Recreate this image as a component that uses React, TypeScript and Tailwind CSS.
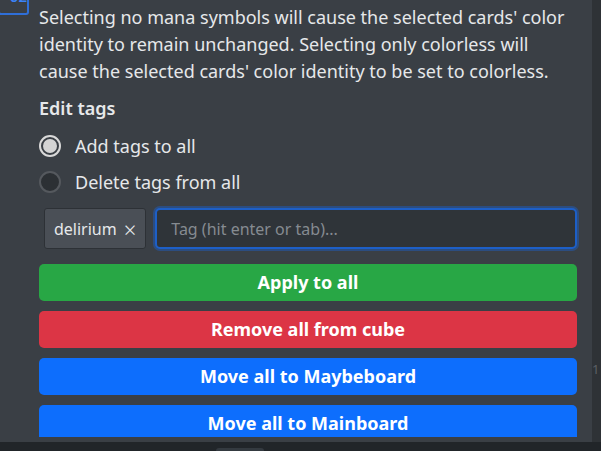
import { useState } from "react";

const font = { fontFamily: "'Segoe UI', 'Noto Sans', 'Open Sans', sans-serif" };

function Radio({ checked, label }: { checked: boolean; label: string }) {
  return (
    <label className="flex h-[36px] items-center gap-[14px]">
      {checked ? (
        <span className="flex h-[22px] w-[22px] items-center justify-center rounded-full border-2 border-[#d9d9d9] bg-[#3a3f45]">
          <span className="h-[14px] w-[14px] rounded-full bg-[#d4d4d4]" />
        </span>
      ) : (
        <span className="h-[22px] w-[22px] rounded-full border-2 border-[#55595e] bg-[#2c3034]" />
      )}
      <span className="text-[18px] text-[#e6e8ea]">{label}</span>
    </label>
  );
}

export default function App() {
  const [tag, setTag] = useState("");
  const buttons = [
    { label: "Apply to all", cls: "bg-[#28a745]" },
    { label: "Remove all from cube", cls: "bg-[#dc3545]" },
    { label: "Move all to Maybeboard", cls: "bg-[#0d6efd]" },
    { label: "Move all to Mainboard", cls: "bg-[#0d6efd]" },
  ];

  return (
    <div className="flex h-[451px] w-[601px] flex-col overflow-hidden bg-[#212529]" style={font}>
      <div className="flex h-[442px] shrink-0">
        <div className="w-[592px] shrink-0 bg-[#3a3f45]">
          <div className="h-[437px] overflow-hidden">
            <div className="-ml-[2px] -mt-[16px] h-[31px] w-[31px] overflow-hidden rounded-[3px] border-2 border-[#2f6fd8] text-right text-[15px] font-semibold leading-[20px] text-[#3b82f6]">
              02
            </div>
            <div className="pl-[39px] pr-[15px]">
              <p className="-mt-[11px] text-[18px] leading-[27px] text-[#e6e8ea]">
                Selecting no mana symbols will cause the selected cards' color identity to remain unchanged. Selecting only colorless will cause the selected cards' color identity to be set to colorless.
              </p>
              <h5 className="mt-[11px] text-[18px] font-semibold leading-[24px] text-[#e6e8ea]">Edit tags</h5>
              <div className="mt-[8px]">
                <Radio checked label="Add tags to all" />
                <Radio checked={false} label="Delete tags from all" />
              </div>
              <div className="mt-[8px] flex gap-[9px] pl-[5px]">
                <span className="flex h-[41px] items-center gap-[7px] rounded-[3px] border border-[#2d3136] bg-[#4a4f56] pl-[9px] pr-[9px] text-[16px] text-[#e6e8ea]">
                  delirium <span className="text-[22px] font-light leading-none">×</span>
                </span>
                <input
                  autoFocus
                  value={tag}
                  onChange={(e) => setTag(e.target.value)}
                  placeholder="Tag (hit enter or tab)..."
                  className="h-[41px] flex-1 rounded-[5px] border-2 border-[#1d5fc7] bg-[#2f3439] px-[14px] text-[16px] text-[#e6e8ea] caret-white shadow-[0_0_0_2px_rgba(29,95,199,0.45)] outline-none placeholder:text-[#868b91]"
                />
              </div>
              <div className="mt-[15px] flex flex-col gap-[10px]">
                {buttons.map((b) => (
                  <button
                    key={b.label}
                    className={`h-[37px] w-full rounded-[5px] text-[18px] font-bold text-white ${b.cls}`}
                  >
                    {b.label}
                  </button>
                ))}
              </div>
            </div>
          </div>
        </div>
        <div className="flex-1 bg-[#2e3236] pt-[360px] text-[13px] text-[#5b6066]">1</div>
      </div>
      <div className="relative flex-1">
        <div className="absolute left-[216px] top-[6px] h-[10px] w-[48px] rounded-[3px] bg-[#343a40]" />
      </div>
    </div>
  );
}
